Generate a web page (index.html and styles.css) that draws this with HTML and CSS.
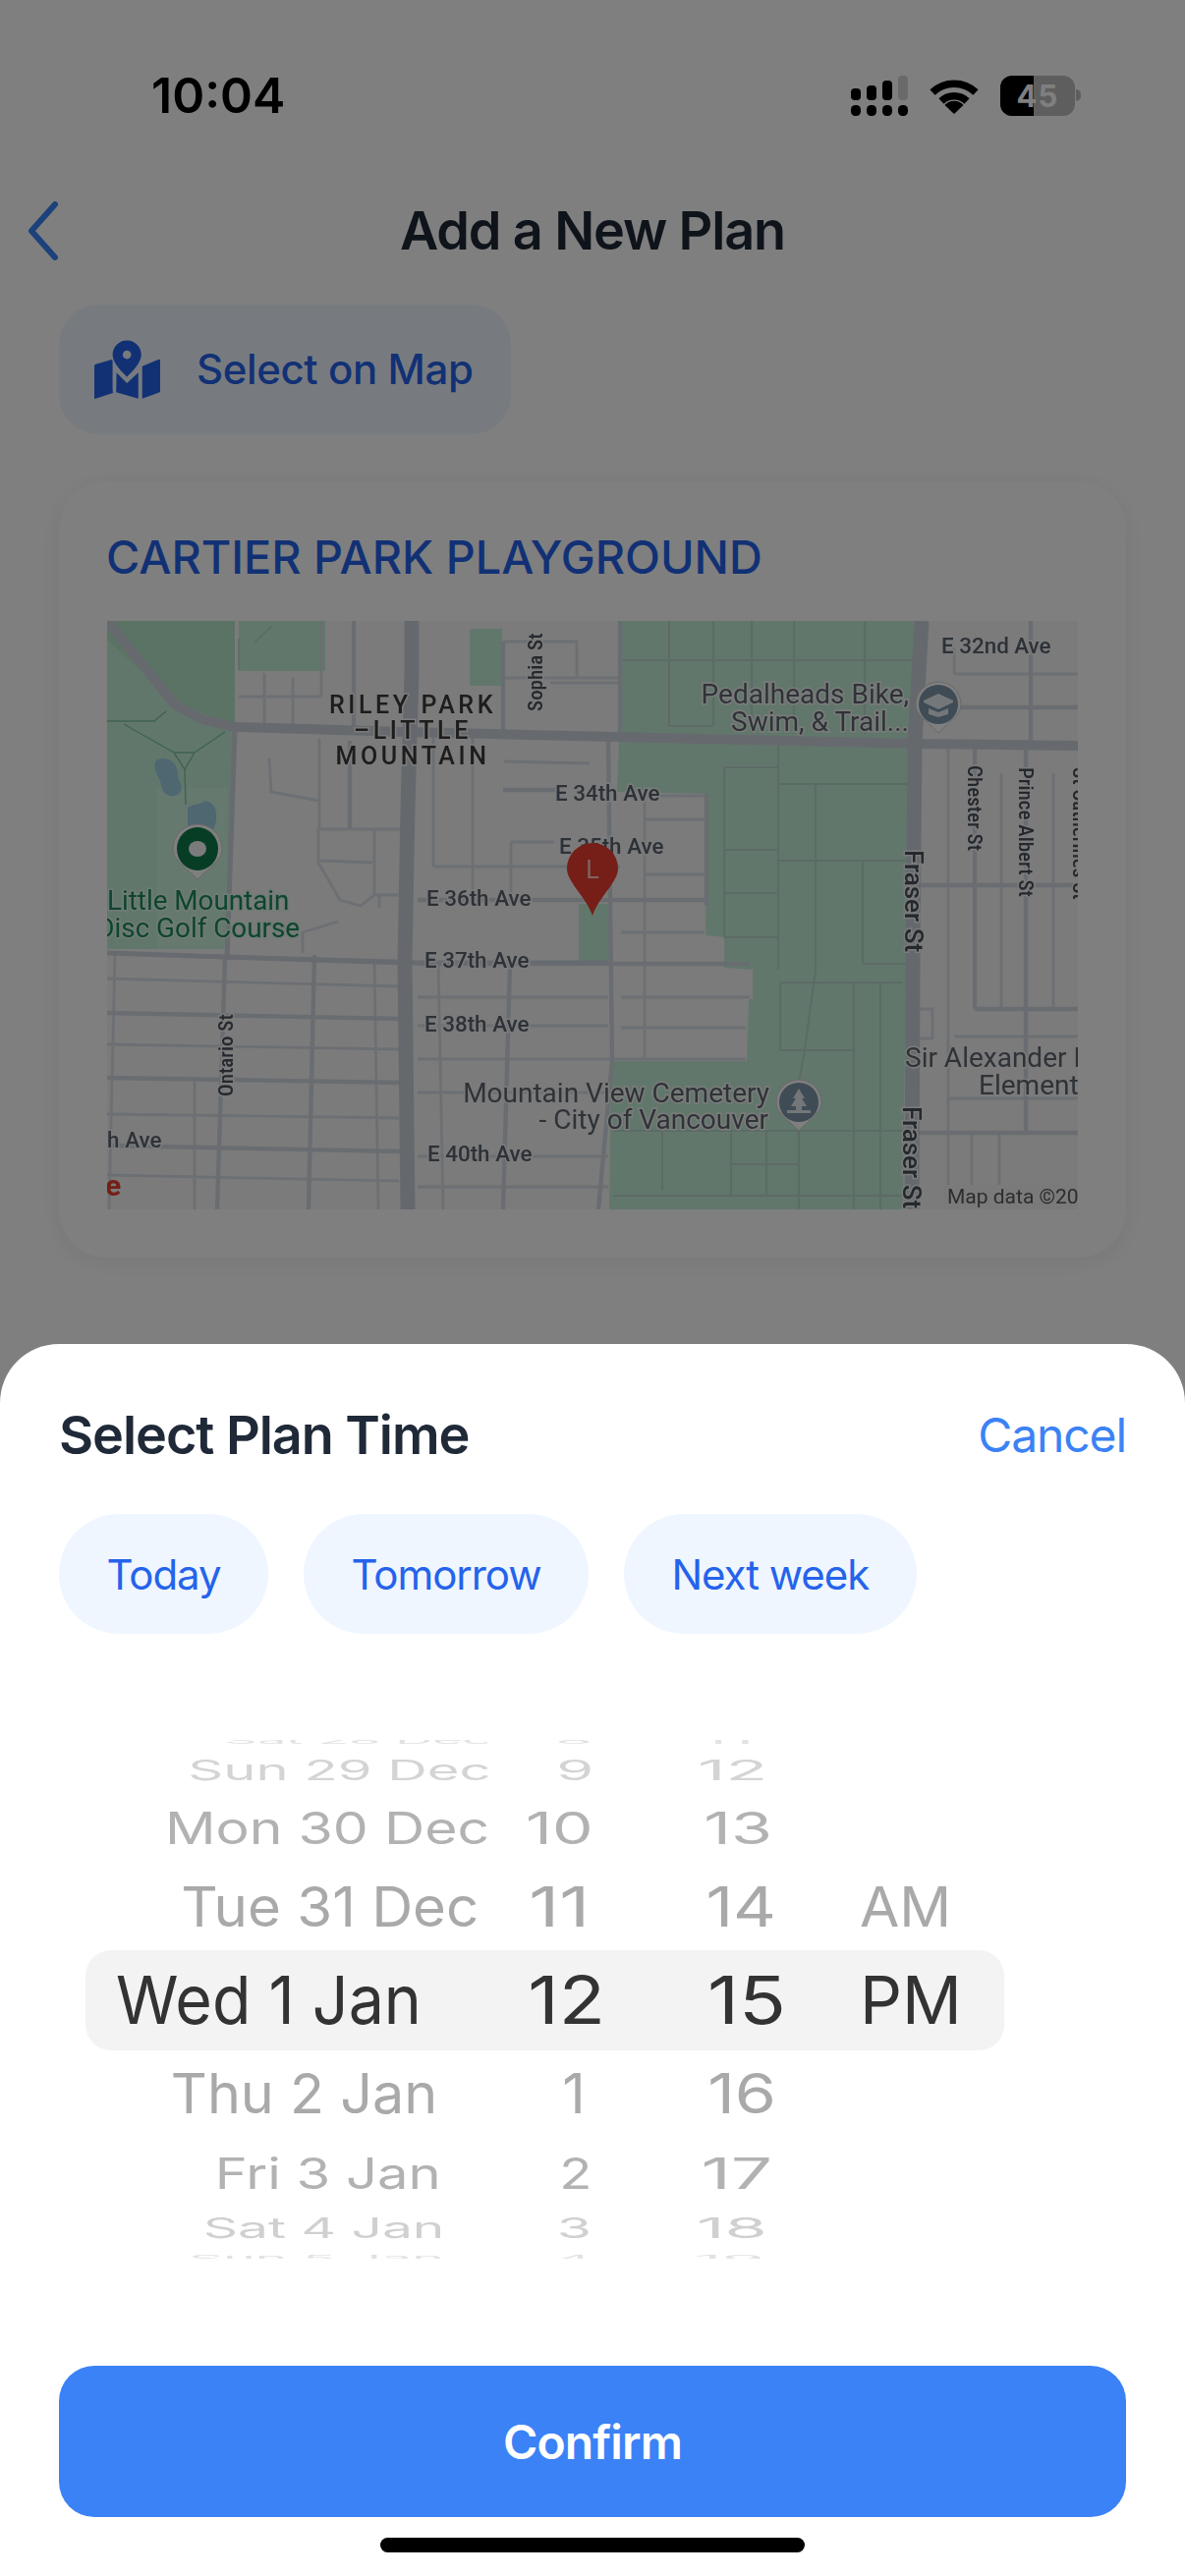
FILE: index.html
```html
<!DOCTYPE html>
<html lang="en">
<head>
<meta charset="utf-8">
<title>Add a New Plan</title>
<link rel="stylesheet" href="styles.css">
</head>
<body>
<div class="phone">
  <div class="status">
    <span class="time">10:04</span>
    <div class="status-icons">
      <svg class="signal" width="58" height="41" viewBox="0 0 58 41">
        <rect x="0" y="13" width="10" height="12" rx="4"/><rect x="16" y="10" width="10" height="15" rx="4"/><rect x="32" y="5" width="10" height="20" rx="4"/><rect class="off" x="48" y="0" width="10" height="25" rx="4"/>
        <rect x="0" y="30" width="10" height="11" rx="4.5"/><rect x="16" y="30" width="10" height="11" rx="4.5"/><rect x="32" y="30" width="10" height="11" rx="4.5"/><rect x="48" y="30" width="10" height="11" rx="4.5"/>
      </svg>
      <svg class="wifi" width="50" height="37" viewBox="0 0 50 37">
        <path class="wifi-arc" d="M3 15 A32 32 0 0 1 47 15"/>
        <path class="wifi-arc" d="M12 24 A19 19 0 0 1 38 24"/>
        <path d="M25 37 L15.5 28 A13 13 0 0 1 34.5 28 Z"/>
      </svg>
      <div class="battery">
        <div class="battery-body"><span class="battery-fill"></span><span class="battery-num">45</span></div>
        <span class="battery-cap"></span>
      </div>
    </div>
  </div>

  <header class="nav">
    <svg class="back" width="36" height="60" viewBox="0 0 36 60"><path d="M30 3 L6 30 L30 57"/></svg>
    <h1 class="nav-title">Add a New Plan</h1>
    <span></span>
  </header>

  <div class="map-btn">
    <svg class="map-icon" width="67" height="60" viewBox="108 138 202 180">
      <path fill-rule="evenodd" d="M208 139a44 44 0 0 1 44 44c0 26-30 54-44 68c-14-14-44-42-44-68a44 44 0 0 1 44-44zm0 31a13 13 0 1 0 0 26a13 13 0 0 0 0-26z"/>
      <path d="M112 212l49-14c1 0 3 1 3 3v84l1 15l-53 18c-2 0-4 0-4-2V217c0-2 2-4 4-5z"/>
      <path d="M176 238l32 32l35-32v80l-68-20z"/>
      <path d="M255 218l51-21c2 0 4 1 4 3v96c0 1-1 2-3 3l-52 19z"/>
    </svg>
    <span class="map-btn-text">Select on Map</span>
  </div>

  <section class="card">
    <h2 class="card-title">CARTIER PARK PLAYGROUND</h2>
    <svg class="map" width="988" height="599" viewBox="0 0 988 599">
      <rect class="m-bg" width="988" height="599"/>
      <!-- parks -->
      <path class="m-park-dark" d="M0 0H130V108L68 82L0 20Z"/>
      <path class="m-park" d="M0 20L68 82L130 108L122 334H0Z"/>
      <path class="m-park-soft" d="M51 170H122V334H51Z"/>
      <path class="m-park" d="M134 0H222V51H134Z"/>
      <path class="m-park" d="M369 8H402V66H369Z"/>
      <path class="m-park" d="M524 0H821V122L820 355L813 355L810 599H511L513 448L651 448L653 385L657 385L657 355L628 353L628 322L609 320L610 176L519 174L521 122Z"/>
      <path class="m-park" d="M480 288H514V349H480Z"/>
      <!-- water -->
      <path class="m-water" d="M50 142c6-4 16-2 20 6c3 6 1 12 5 18c2 5 0 11-7 12c-8 1-12-4-13-11c-1-6-5-10-6-15c-1-4-1-8 1-10z"/>
      <path class="m-water" d="M82 190c6-4 14-3 18-7c5 1 10 4 11 12c1 8-1 15-5 21l-18 0c-4-1-6-3-6-8z"/>
      <!-- park paths -->
      <path class="m-trail" d="M17 105L68 134L79 151L80 187M120 113L89 134L79 151M68 134H89M0 102H48L60 92"/>
      <path class="m-trail-soft" d="M134 50V18M150 22L168 5"/>
      <!-- streets inside parks -->
      <path class="m-pline" d="M572 0V107M617 0V107M656 0V115M699 0V115M771 0V115M524 40H821M572 107H617M683 122V355M721 166V355M628 149V322M769 244V349M628 149H683M683 166H815M628 233H683M683 244H815M628 277H683M628 322H683M769 349H815M685 368V437M760 368V599M787 368V599M685 368H810M685 437H760M721 355L710 437L704 470V599M515 519H810M635 519V585M671 519V585M565 519V580M635 553H704M515 585H810"/>
      <!-- minor streets -->
      <path class="m-st" d="M0 338L300 346M0 364L298 372M0 431L297 436M0 502L297 506M0 564L297 570M8 338L2 599M272 346L276 599M89 466V599M160 53V107M189 58V107M134 77H218M218 0V77M165 140L167 174L216 183M216 120V210M215 210V246L237 284L258 290L272 279L296 279M216 212H299M216 244L270 246M272 212V279M199 338V317L235 306M277 279V292"/>
      <path class="m-st" d="M404 143L491 145M403 21H478V58M403 58H522M332 115V250M337 346L342 599M332 250H522M372 115V290M411 225V290M411 225H455M451 63H521M547 178V446M547 178H610M547 202H610M547 258H610M523 317H608M523 383H654M523 414H650M316 383H510M316 412H510M316 446H650M316 545H510M316 576H510M316 480H510M856 130V599M910 155V395M963 155V395M862 27V54M862 54H988M862 423H988M856 486H988M880 521V599M908 521V599M825 395L840 395V425H825"/>
      <!-- bold streets -->
      <path class="m-st-bold" d="M0 399L300 405M0 465L300 470M0 534L300 540M120 342L112 599M211 340L205 599M251 0V107M247 122V212M403 21V115M403 172H456M410 350L403 599M316 284H610M316 349H654M610 176V290M510 120L514 448L500 599M522 0V115M883 130V395M883 395H988M935 130V521M940 0V127M825 88H988M825 269H988M825 521H988"/>
      <!-- main roads -->
      <path class="m-road-thin" d="M130 111L122 345M0 338L303 348M300 348H510"/>
      <path class="m-road" d="M0 0L68 84L96 100L130 108L303 113L822 125L988 127"/>
      <path class="m-main" d="M310 0V52L306 190L303 347L306 599"/>
      <path class="m-main" d="M829 0L822 125L820 347L819 599"/>
      <!-- labels -->
      <g class="t-area">
        <text x="311" y="94">RILEY PARK</text>
        <text x="311" y="120">–LITTLE</text>
        <text x="311" y="146">MOUNTAIN</text>
      </g>
      <g class="t-st">
        <text x="456" y="183">E 34th Ave</text>
        <text x="460" y="237">E 35th Ave</text>
        <text x="325" y="290">E 36th Ave</text>
        <text x="323" y="353">E 37th Ave</text>
        <text x="323" y="418">E 38th Ave</text>
        <text x="326" y="550">E 40th Ave</text>
        <text x="-51" y="536">E 40th Ave</text>
        <text x="849" y="33">E 32nd Ave</text>
      </g>
      <g class="t-st t-v">
        <text transform="translate(443 92) rotate(-90)">Sophia St</text>
        <text transform="translate(128 484) rotate(-90)">Ontario St</text>
        <text transform="translate(876 147) rotate(90)">Chester St</text>
        <text transform="translate(928 149) rotate(90)">Prince Albert St</text>
        <text transform="translate(983 149) rotate(90)">St Catherines St</text>
      </g>
      <g class="t-fraser">
        <text transform="translate(812 233) rotate(90)">Fraser St</text>
        <text transform="translate(810 494) rotate(90)">Fraser St</text>
      </g>
      <g class="t-poi">
        <text class="t-end" x="816" y="84">Pedalheads Bike,</text>
        <text class="t-end" x="816" y="112">Swim, &amp; Trail...</text>
        <text class="t-end" x="674" y="490">Mountain View Cemetery</text>
        <text class="t-end" x="673" y="517">- City of Vancouver</text>
        <text x="812" y="454">Sir Alexander Mackenzie</text>
        <text x="887" y="482">Elementary</text>
      </g>
      <g class="t-park">
        <text x="0" y="294">Little Mountain</text>
        <text class="t-end" x="196" y="322">Disc Golf Course</text>
      </g>
      <text class="t-red" x="-2" y="585">e</text>
      <!-- attribution -->
      <rect class="m-attr" x="851" y="574" width="137" height="25"/>
      <text class="t-attr" x="855" y="593">Map data ©2024</text>
      <!-- pins -->
      <path class="p-halo" d="M92 207a25 25 0 0 1 25 25c0 10-8 15-25 31c-17-16-25-21-25-31a25 25 0 0 1 25-25z"/>
      <ellipse class="p-green" cx="92" cy="232" rx="21" ry="22"/>
      <ellipse class="p-hole" cx="92" cy="232" rx="9" ry="8"/>
      <path class="p-halo" d="M846 62a23 23 0 0 1 23 23c0 10-8 14-23 29c-15-15-23-19-23-29a23 23 0 0 1 23-23z"/>
      <circle class="p-slate" cx="846" cy="85" r="20"/>
      <path class="p-white" d="M846 74l15 7v2l-15 7l-15-7v-2zM836 89l10 4l10-4v6l-10 3l-10-3z"/>
      <path class="p-halo" d="M704 467a23 23 0 0 1 23 23c0 10-8 14-23 29c-15-15-23-19-23-29a23 23 0 0 1 23-23z"/>
      <circle class="p-slate" cx="704" cy="490" r="20"/>
      <path class="p-white" d="M704 476l6 10h-3l5 8h-5v4h-6v-4h-5l5-8h-3zM692 498h24v3h-24z"/>
      <path class="p-red" d="M494 226a26 26 0 0 1 26 26c0 14-19 28-26 48c-7-20-26-34-26-48a26 26 0 0 1 26-26z"/>
      <text class="t-pin" x="494" y="262">L</text>
    </svg>
  </section>

  <div class="scrim"></div>

  <div class="sheet">
    <div class="sheet-head">
      <h2 class="sheet-title">Select Plan Time</h2>
      <span class="cancel">Cancel</span>
    </div>
    <div class="chips">
      <span class="chip">Today</span>
      <span class="chip">Tomorrow</span>
      <span class="chip">Next week</span>
    </div>
    <div class="picker">
      <div class="row r1"><span class="c-date"><i>Sat 28 Dec</i></span><span class="c-hour"><i>8</i></span><span class="c-min"><i>11</i></span><span class="c-ap"></span></div>
      <div class="row r2"><span class="c-date"><i>Sun 29 Dec</i></span><span class="c-hour"><i>9</i></span><span class="c-min"><i>12</i></span><span class="c-ap"></span></div>
      <div class="row r3"><span class="c-date"><i>Mon 30 Dec</i></span><span class="c-hour"><i>10</i></span><span class="c-min"><i>13</i></span><span class="c-ap"></span></div>
      <div class="row r4"><span class="c-date"><i>Tue 31 Dec</i></span><span class="c-hour"><i>11</i></span><span class="c-min"><i>14</i></span><span class="c-ap"><i>AM</i></span></div>
      <div class="row r5"><span class="c-date"><i>Wed 1 Jan</i></span><span class="c-hour"><i>12</i></span><span class="c-min"><i>15</i></span><span class="c-ap"><i>PM</i></span></div>
      <div class="row r6"><span class="c-date"><i>Thu 2 Jan</i></span><span class="c-hour"><i>1</i></span><span class="c-min"><i>16</i></span><span class="c-ap"></span></div>
      <div class="row r7"><span class="c-date"><i>Fri 3 Jan</i></span><span class="c-hour"><i>2</i></span><span class="c-min"><i>17</i></span><span class="c-ap"></span></div>
      <div class="row r8"><span class="c-date"><i>Sat 4 Jan</i></span><span class="c-hour"><i>3</i></span><span class="c-min"><i>18</i></span><span class="c-ap"></span></div>
      <div class="row r9"><span class="c-date"><i>Sun 5 Jan</i></span><span class="c-hour"><i>4</i></span><span class="c-min"><i>19</i></span><span class="c-ap"></span></div>
    </div>
    <button class="confirm">Confirm</button>
    <div class="home"></div>
  </div>
</div>
</body>
</html>
```
FILE: styles.css
```css
* { box-sizing: border-box; }
html, body { margin: 0; padding: 0; background: #fff; }
body { font-family: Inter, "Liberation Sans", sans-serif; }
h1, h2 { margin: 0; font: inherit; }

.phone { position: relative; width: 1206px; height: 2622px; overflow: hidden; background: #fff; }

/* status bar */
.status { height: 170px; padding: 24px 106px 0 154px; display: flex; align-items: center; justify-content: space-between; }
.time { font-size: 50px; font-weight: 600; color: #000; }
.status-icons { display: flex; align-items: center; gap: 22px; }
.signal rect { fill: #000; }
.signal .off { fill: #d4d4d4; }
.wifi path { fill: #000; }
.wifi .wifi-arc { fill: none; stroke: #000; stroke-width: 7.5; }
.battery { display: flex; align-items: center; gap: 1px; }
.battery-body { position: relative; width: 76px; height: 41px; border-radius: 12px; background: #bcbcbc; overflow: hidden; display: flex; align-items: center; justify-content: center; }
.battery-fill { position: absolute; left: 0; top: 0; bottom: 0; width: 34px; background: #000; }
.battery-num { position: relative; font-size: 31px; font-weight: 700; color: #fff; letter-spacing: 1px; }
.battery-cap { width: 5px; height: 12px; border-radius: 0 6px 6px 0; background: #bcbcbc; }

/* nav */
.nav { height: 130px; padding: 0 26px; display: grid; grid-template-columns: 1fr auto 1fr; align-items: center; }
.back path { fill: none; stroke: #3b82f6; stroke-width: 6; stroke-linecap: round; stroke-linejoin: round; }
.nav-title { font-size: 54px; font-weight: 600; letter-spacing: -1.15px; color: #1f2937; margin-top: -2px; }

/* map button */
.map-btn { margin: 10px 0 0 60px; width: 460px; height: 132px; border-radius: 40px; background: #eff6ff; display: flex; align-items: center; gap: 37px; padding-left: 36px; color: #2563eb; font-size: 42px; font-weight: 500; letter-spacing: -.4px; }
.map-icon { fill: #2563eb; flex: none; }
.map-btn-text { margin-top: -2px; }

/* card */
.card { margin: 48px 60px 0; height: 790px; padding: 48px 49px 0; border-radius: 48px; background: #fff; box-shadow: 0 4px 24px rgba(0,0,0,.07); }
.card-title { font-size: 46.8px; line-height: 58px; font-weight: 500; color: #2563eb; margin: 0 0 36px -1px; }
.map { display: block; filter: blur(.7px); font-family: Roboto, sans-serif; }

.m-bg { fill: #f6f6f6; }
.m-park { fill: #c4efd8; }
.m-park-dark { fill: #b4e6c8; }
.m-park-soft { fill: #cdf2dd; }
.m-water { fill: #9ccfe2; }
.m-trail { fill: none; stroke: #7ec4a0; stroke-width: 1.4; }
.m-trail-soft { fill: none; stroke: #a8dcc0; stroke-width: 1.4; }
.m-pline { fill: none; stroke: #b8d6cd; stroke-width: 2.2; }
.m-st { fill: none; stroke: #d8dfe6; stroke-width: 2.8; }
.m-st-bold { fill: none; stroke: #d2dae2; stroke-width: 4.4; }
.m-road { fill: none; stroke: #ccd4dc; stroke-width: 10; }
.m-road-thin { fill: none; stroke: #ced6de; stroke-width: 5; }
.m-main { fill: none; stroke: #cbd3dc; stroke-width: 15; }
.m-attr { fill: #f4f4f4; }

.t-area text { font-size: 25px; font-weight: 500; letter-spacing: 3.6px; text-anchor: middle; fill: #3a3a3a; paint-order: stroke; stroke: #f6f6f6; stroke-width: 3px; }
.t-st text { font-size: 22.4px; font-weight: 500; fill: #5a6470; paint-order: stroke; stroke: #f6f6f6; stroke-width: 3px; }
.t-v text { font-size: 21px; font-stretch: condensed; fill: #4a525c; }
.t-fraser text { font-size: 26px; font-weight: 500; fill: #4a525c; paint-order: stroke; stroke: #f6f6f6; stroke-width: 3px; }
.t-poi text { font-size: 28px; fill: #5f6770; paint-order: stroke; stroke: #f6f6f6; stroke-width: 3px; }
.t-park text { font-size: 27.8px; fill: #1d8a5c; paint-order: stroke; stroke: #e0f6ea; stroke-width: 3px; }
.map .t-end { text-anchor: end; }
.t-red { font-size: 30px; font-weight: 700; fill: #e8412f; }
.t-attr { font-size: 21px; fill: #5a5a5a; }
.t-pin { font-size: 25px; text-anchor: middle; fill: #ffc9c0; }

.p-halo { fill: #fff; stroke: #d0d0d0; stroke-width: 1; }
.p-green { fill: #0f7a4a; }
.p-hole { fill: #f6f6f6; }
.p-slate { fill: #7f97aa; }
.p-white { fill: #e8eef2; }
.p-red { fill: #ea3f30; }

/* scrim over the page */
.scrim { position: absolute; inset: 0; background: rgba(0,0,0,.5); }

/* sheet */
.sheet { position: absolute; left: 0; right: 0; bottom: 0; height: 1254px; background: #fff; border-radius: 60px 60px 0 0; padding-top: 62px; }
.sheet-head { margin: 0 60px; height: 60px; display: flex; align-items: center; justify-content: space-between; }
.sheet-title { font-size: 54px; font-weight: 600; letter-spacing: -1.05px; color: #1f2937; }
.cancel { font-size: 48px; letter-spacing: -1.1px; color: #3b82f6; }
.chips { margin: 51px 0 0 60px; display: flex; gap: 36px; }
.chip { height: 122px; padding: 0 48.5px; border-radius: 61px; background: #eff6ff; color: #2563eb; font-size: 42px; letter-spacing: -1.05px; display: flex; align-items: center; }

/* picker */
.picker { margin-top: 108px; height: 528px; overflow: hidden; font-size: 68px; }
.row { position: relative; display: grid; grid-template-columns: 500px 120px 180px 1fr; align-content: center; }
.row > span { position: relative; height: 0; display: flex; align-items: center; justify-content: flex-end; white-space: nowrap; }
.row i { display: block; font-style: normal; line-height: 1; transform-origin: right center; transform: scale(var(--sx, 1), var(--sy, 1)); }
.row .c-date { padding-right: var(--pd, 0); }
.row .c-date i { transform: scale(var(--dx, 1), var(--sy, 1)); }
.row .c-hour { padding-right: var(--ph, 0); }
.row .c-hour i { transform: scale(var(--hx, 1), var(--sy, 1)); }
.row .c-min { padding-right: var(--pm, 0); }
.row .c-min i { transform: scale(var(--mx, 1), var(--sy, 1)); }
.row .c-ap { justify-content: flex-start; padding-left: 75px; }
.row .c-ap i { transform-origin: left center; transform: scale(var(--ax, 1), var(--sy, 1)); }
.r1 { height: 2px; color: #e2e2e2; --sy: .14; --dx: .77; --pd: 0px; --hx: .9; --ph: 17px; --mx: .98; --pm: 33px; }
.r2 { height: 58px; color: #d4d4d4; --sy: .42; --dx: .825; --pd: 1px; --hx: .9; --ph: 16px; --mx: 1.03; --pm: 19px; }
.r3 { height: 58px; color: #b2b2b2; --sy: .66; --dx: .84; --pd: 2px; --hx: .97; --ph: 16px; --mx: 1; --pm: 14px; }
.r4 { height: 104px; color: #a9a9a9; --sy: .82; --dx: .855; --pd: 13px; --hx: 1.12; --ph: 20px; --mx: 1; --pm: 10px; --ax: .86; }
.r5 { height: 84px; color: #333; --dx: .948; --pd: 71px; --hx: 1.14; --ph: 4px; --mx: 1.16; --pm: 0px; --ax: .99; }
.r5::before { content: ""; position: absolute; left: 87px; width: 935px; top: -8px; bottom: -10px; border-radius: 26px; background: #f3f3f3; }
.r6 { height: 106px; color: #a9a9a9; --sy: .82; --dx: .845; --pd: 55px; --hx: .85; --ph: 24px; --mx: 1; --pm: 10px; }
.r7 { height: 58px; color: #b2b2b2; --sy: .64; --dx: .825; --pd: 51px; --hx: .8; --ph: 18px; --mx: 1.1; --pm: 14px; }
.r8 { height: 54px; color: #d0d0d0; --sy: .42; --dx: .81; --pd: 48px; --hx: .84; --ph: 18px; --mx: 1.03; --pm: 19px; }
.r9 { height: 8px; color: #e2e2e2; --sy: .14; --dx: .81; --pd: 48px; --hx: .84; --ph: 18px; --mx: 1.03; --pm: 22px; }

/* confirm */
.confirm { display: block; margin: 109px 60px 0; width: 1086px; height: 154px; border: 0; border-radius: 36px; background: #3b82f6; color: #fff; font: 600 48px Inter, sans-serif; letter-spacing: -.9px; }
.home { margin: 21px auto 0; width: 432px; height: 15px; border-radius: 8px; background: #000; }
```
